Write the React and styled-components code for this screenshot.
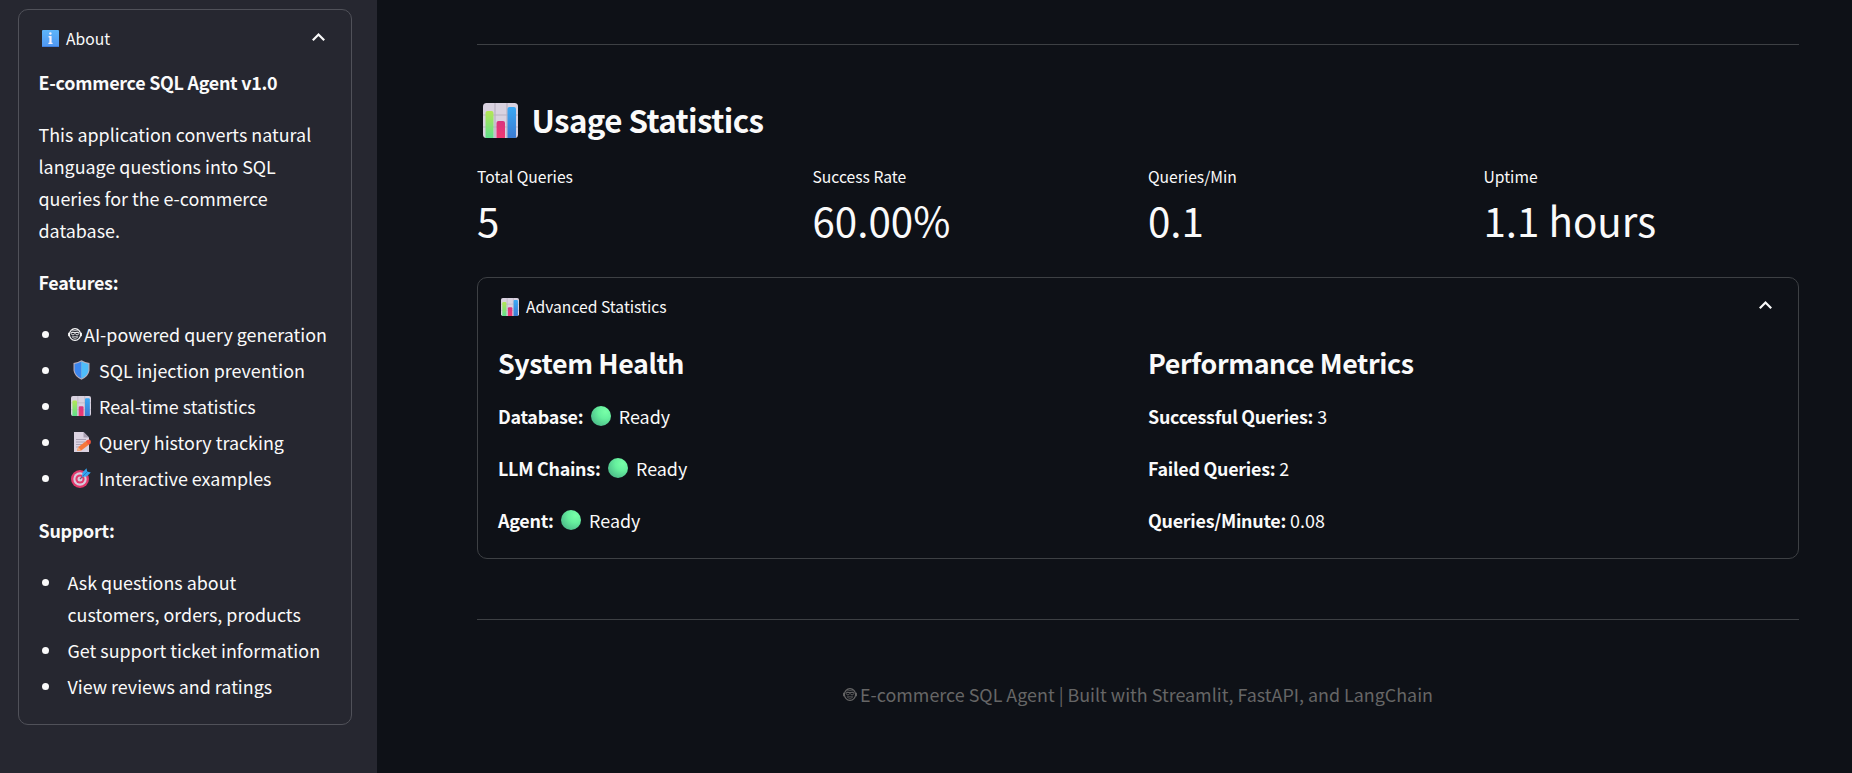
import React from "react";
import styled, { createGlobalStyle } from "styled-components";

const GlobalStyle = createGlobalStyle`
  * { box-sizing: border-box; }
  html, body { margin: 0; padding: 0; background: #0e1117; }
  body {
    font-family: "Noto Sans CJK SC", "Noto Sans", sans-serif;
    font-size: 17.9px;
    line-height: 32px;
    color: #fafafa;
    overflow: hidden;
  }
`;

const Page = styled.div`
  display: flex;
  width: 1852px;
  height: 773px;
  overflow: hidden;
`;

const Sidebar = styled.aside`
  width: 377px;
  flex: none;
  background: #262730;
  padding: 9px 25px 0 18px;
`;

const Main = styled.main`
  flex: 1;
  padding: 44px 53px 0 100px;
`;

const Panel = styled.section`
  border: 1px solid ${(p) => p.$line};
  border-radius: 10px;
  height: ${(p) => p.$height}px;
  padding: 0 20px 0 ${(p) => p.$left}px;
`;

const PanelHeader = styled.header`
  display: flex;
  align-items: center;
  height: ${(p) => p.$height}px;
  padding: ${(p) => p.$top || 0}px 5px ${(p) => p.$bottom || 0}px ${(p) => p.$left}px;
  font-size: 15.66px;
  line-height: 28px;
  svg { flex: none; }
  svg:last-child { margin-bottom: 3px; }
`;

const HeaderLabel = styled.span`
  flex: 1;
  padding-left: 7px;
`;

const Para = styled.p`
  margin: 0 0 20px;
`;

const Strong = styled.strong`
  font-weight: 600;
  letter-spacing: -0.26px;
`;

const List = styled.ul`
  list-style: none;
  margin: 0 0 20px;
  padding: 0 0 0 3.5px;
  display: flex;
  flex-direction: column;
  gap: 4px;
  white-space: nowrap;
`;

const Item = styled.li`
  display: flex;
`;

const Bullet = styled.span`
  flex: none;
  width: 7px;
  height: 7px;
  border-radius: 50%;
  background: #fafafa;
  margin: 13px 18.5px 0 0;
`;

const Feature = styled.span`
  display: flex;
  align-items: center;
  padding-left: ${(p) => p.$indent}px;
  gap: ${(p) => p.$gap}px;
`;

const Rule = styled.hr`
  margin: ${(p) => p.$gap || 0}px 0 0;
  border: 0;
  height: 1px;
  background: #3d4044;
`;

const Title = styled.h3`
  display: flex;
  align-items: center;
  margin: 54px 0 0;
  padding-left: 6px;
  height: 42px;
  gap: 13.5px;
  font-size: 31.3px;
  line-height: 42px;
  font-weight: 600;
  letter-spacing: -0.6px;
  white-space: nowrap;
`;

const Metrics = styled.div`
  display: grid;
  grid-template-columns: repeat(4, 1fr);
  gap: 20px;
  margin-top: 22px;
  height: 114px;
`;

const MetricLabel = styled.div`
  font-size: 15.66px;
  line-height: 28px;
`;

const MetricValue = styled.div`
  font-size: 40.3px;
  line-height: 58px;
`;

const Columns = styled.div`
  display: grid;
  grid-template-columns: 1fr 1fr;
  gap: 20px;
`;

const Subhead = styled.h4`
  margin: 0 0 19px;
  font-size: 26.8px;
  line-height: 36px;
  font-weight: 600;
  letter-spacing: -0.39px;
`;

const Row = styled.div`
  display: flex;
  align-items: center;
  height: 32px;
  margin-bottom: 20px;
  white-space: pre;
`;

const Dot = styled.span`
  width: 20px;
  height: 20px;
  border-radius: 50%;
  margin: 0 8px 0 7.5px;
  background: radial-gradient(circle at 72% 28%, #78ffa8 0%, #66f09e 35%, #4fc28c 75%, #519c8c 100%);
`;

const Footer = styled.footer`
  display: flex;
  align-items: center;
  justify-content: center;
  margin-top: 58px;
  gap: 3px;
  color: #666666;
  white-space: nowrap;
`;

const Chevron = () => (
  <svg width="15" height="10" viewBox="0 0 15 10" fill="none" stroke="#fafafa" strokeWidth="2.2">
    <path d="M1.800 8.200 7.500 2.500l5.700 5.700" />
  </svg>
);

const InfoIcon = () => (
  <svg width="17" height="17" viewBox="0 0 17 17">
    <defs>
      <linearGradient id="info" x1="0" y1="0" x2="0" y2="1">
        <stop offset="0" stopColor="#5db5fb" />
        <stop offset="1" stopColor="#4f97f2" />
      </linearGradient>
    </defs>
    <rect width="17" height="17" rx="1" fill="url(#info)" />
    <path d="M0 16.500h17" stroke="#3f7fe0" />
    <rect x="7.200" y="2.300" width="2.400" height="2.400" rx="1.200" fill="#f3eefb" />
    <path d="M6.600 6h3v6.700h1v1.400H6.400v-1.400h1V7.400h-.8z" fill="#f3eefb" />
  </svg>
);

const ChartIcon = ({ size }) => (
  <svg width={size} height={size} viewBox="0 0 35 35">
    <defs>
      <linearGradient id="green" x1="0" y1="0" x2="0" y2="1">
        <stop offset="0" stopColor="#b5e655" />
        <stop offset="1" stopColor="#5fe08c" />
      </linearGradient>
      <linearGradient id="blue" x1="0" y1="0" x2="0" y2="1">
        <stop offset="0" stopColor="#3aa9f5" />
        <stop offset="1" stopColor="#3c7bd2" />
      </linearGradient>
      <linearGradient id="pink" x1="0" y1="0" x2="0" y2="1">
        <stop offset="0" stopColor="#d8357f" />
        <stop offset="1" stopColor="#f03a72" />
      </linearGradient>
    </defs>
    <rect width="35" height="35" rx="3.500" fill="#d9d2e0" />
    <path d="M12 0v35M24 0v35M0 12h35M0 24h35" stroke="#b9b2c1" strokeWidth="1.200" />
    <path d="M2.500 35V10q0-2 2-2h4q2 0 2 2v25z" fill="url(#green)" />
    <path d="M13.500 35V20q0-2 2-2h4.500q2 0 2 2v15z" fill="url(#pink)" />
    <path d="M24.500 35V6q0-2 2-2h4.500q2 0 2 2v29z" fill="url(#blue)" />
  </svg>
);

const ShieldIcon = () => (
  <svg width="17" height="20" viewBox="0 0 17 20">
    <path d="M8.500.3Q12 2.600 16.500 3v7.500q-.8 6-8 9.200-7.200-3.200-8-9.200V3Q5 2.600 8.500.3z" fill="#b9aebb" />
    <path d="M8.500 1.500Q5.500 3.500 1.600 3.900v6.500q.8 5 6.900 8.200z" fill="#3b86ee" />
    <path d="M8.500 1.500q3 2 6.900 2.400v6.500q-.8 5-6.900 8.200z" fill="#4fbdfa" />
  </svg>
);

const MemoIcon = () => (
  <svg width="18" height="20" viewBox="0 0 18 20">
    <path d="M1 0h9.500L16 5.500V20H1z" fill="#dcd3e2" />
    <path d="M10.500 0 16 5.500h-5.500z" fill="#a99fb1" />
    <path d="M3 7.500h10M3 10h9M3 12.500h6M3 15h3" stroke="#aaa0b3" />
    <path d="M4 18.800 5.300 15l9.200-7 2.900 3.600-9.200 7z" fill="#f5773c" />
    <path d="m12.900 9.200 1.600-1.200q2.400-1.200 3.200.8.500 1.800-.3 2.800l-1.600 1.200z" fill="#f4553f" />
    <path d="M4 18.800 5.300 15l2.900 3.600z" fill="#f4b183" />
  </svg>
);

const TargetIcon = () => (
  <svg width="20" height="20" viewBox="0 0 20 20">
    <circle cx="9" cy="11" r="9" fill="#e2396c" />
    <circle cx="9" cy="11" r="6.700" fill="#d8cbdc" />
    <circle cx="9" cy="11" r="4.600" fill="#e2396c" />
    <circle cx="9" cy="11" r="2.500" fill="#d8cbdc" />
    <path d="m9 11 5-5" stroke="#7d5577" strokeWidth="1.300" />
    <path d="m11 8.800.5-4.300L15.500.3l.7 3.300 3.600.8-4.200 4z" fill="#35a4ee" />
    <path d="m12 8 4-4" stroke="#2777c8" />
  </svg>
);

const RobotIcon = () => (
  <svg width="14" height="13" viewBox="0 0 14 13" fill="none" stroke="currentColor">
    <ellipse cx="7" cy="6.500" rx="5.600" ry="5.800" strokeWidth="1.200" />
    <path d="M.7 4.700v3.600M13.300 4.700v3.600" strokeWidth="1.200" />
    <path d="M3.600 3Q7 2 10.400 3" strokeWidth=".7" />
    <path d="M3.200 4.500h7.600v1q-.3 1.400-1.700 1.400-1.200 0-1.600-1.200h-1Q6.100 6.900 4.900 6.900q-1.400 0-1.700-1.400z" strokeWidth=".9" />
    <path d="M4.200 8.700h5.600q-.6 1.700-2.800 1.700t-2.800-1.700z" strokeWidth=".7" />
  </svg>
);

const FEATURES = [
  { text: "AI-powered query generation", icon: <RobotIcon />, indent: -1.5, gap: 2.5 },
  { text: "SQL injection prevention", icon: <ShieldIcon />, indent: 5, gap: 9.5 },
  { text: "Real-time statistics", icon: <ChartIcon size={20} />, indent: 3, gap: 8.5 },
  { text: "Query history tracking", icon: <MemoIcon />, indent: 5, gap: 8.5 },
  { text: "Interactive examples", icon: <TargetIcon />, indent: 3, gap: 8.5 },
];

const METRICS = [
  ["Total Queries", "5"],
  ["Success Rate", "60.00%"],
  ["Queries/Min", "0.1"],
  ["Uptime", "1.1 hours"],
];

const HEALTH = ["Database:", "LLM Chains:", "Agent:"];

const PERFORMANCE = [
  ["Successful Queries:", "3"],
  ["Failed Queries:", "2"],
  ["Queries/Minute:", "0.08"],
];

export default function App() {
  return (
    <Page>
      <GlobalStyle />
      <Sidebar>
        <Panel $line="#505159" $height={716} $left={19.5}>
          <PanelHeader $height={56} $top={1} $left={3.5}>
            <InfoIcon />
            <HeaderLabel>About</HeaderLabel>
            <Chevron />
          </PanelHeader>
          <Para><Strong>E-commerce SQL Agent v1.0</Strong></Para>
          <Para>
            This application converts natural<br />
            language questions into SQL<br />
            queries for the e-commerce<br />
            database.
          </Para>
          <Para><Strong>Features:</Strong></Para>
          <List>
            {FEATURES.map((f) => (
              <Item key={f.text}>
                <Bullet />
                <Feature $indent={f.indent} $gap={f.gap}>{f.icon}<span>{f.text}</span></Feature>
              </Item>
            ))}
          </List>
          <Para><Strong>Support:</Strong></Para>
          <List>
            <Item><Bullet /><span>Ask questions about<br />customers, orders, products</span></Item>
            <Item><Bullet /><span>Get support ticket information</span></Item>
            <Item><Bullet /><span>View reviews and ratings</span></Item>
          </List>
        </Panel>
      </Sidebar>
      <Main>
        <Rule />
        <Title><ChartIcon size={35} /><span>Usage Statistics</span></Title>
        <Metrics>
          {METRICS.map(([label, value]) => (
            <div key={label}>
              <MetricLabel>{label}</MetricLabel>
              <MetricValue>{value}</MetricValue>
            </div>
          ))}
        </Metrics>
        <Panel $line="#3d4044" $height={282} $left={20}>
          <PanelHeader $height={67} $bottom={10} $left={3}>
            <ChartIcon size={18} />
            <HeaderLabel>Advanced Statistics</HeaderLabel>
            <Chevron />
          </PanelHeader>
          <Columns>
            <div>
              <Subhead>System Health</Subhead>
              {HEALTH.map((name) => (
                <Row key={name}><Strong>{name}</Strong><Dot /><span>Ready</span></Row>
              ))}
            </div>
            <div>
              <Subhead>Performance Metrics</Subhead>
              {PERFORMANCE.map(([name, value]) => (
                <Row key={name}><Strong>{name}</Strong><span> {value}</span></Row>
              ))}
            </div>
          </Columns>
        </Panel>
        <Rule $gap={60} />
        <Footer><RobotIcon /><span>E-commerce SQL Agent | Built with Streamlit, FastAPI, and LangChain</span></Footer>
      </Main>
    </Page>
  );
}
